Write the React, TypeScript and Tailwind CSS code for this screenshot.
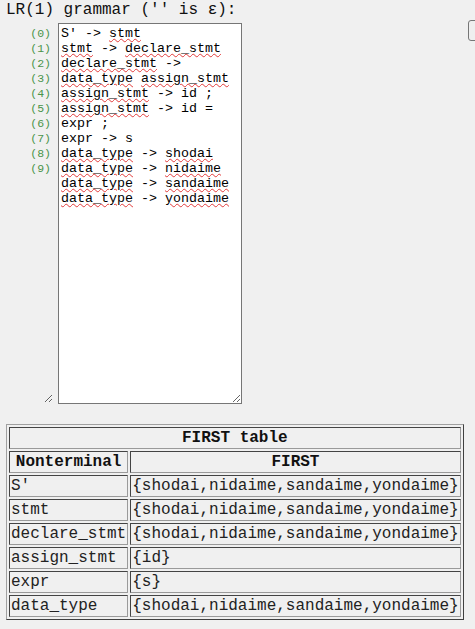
import React from "react";

const U = ({ children }: { children: React.ReactNode }) => (
  <span className="underline decoration-wavy decoration-[#e23a3a] decoration-1 underline-offset-[1px]">
    {children}
  </span>
);

const grammarLines: React.ReactNode[] = [
  <>S' -&gt; <U>stmt</U></>,
  <><U>stmt</U> -&gt; <U>declare_stmt</U></>,
  <><U>declare_stmt</U> -&gt;</>,
  <><U>data_type</U> <U>assign_stmt</U></>,
  <><U>assign_stmt</U> -&gt; id ;</>,
  <><U>assign_stmt</U> -&gt; id =</>,
  <>expr ;</>,
  <>expr -&gt; s</>,
  <><U>data_type</U> -&gt; <U>shodai</U></>,
  <><U>data_type</U> -&gt; <U>nidaime</U></>,
  <><U>data_type</U> -&gt; <U>sandaime</U></>,
  <><U>data_type</U> -&gt; <U>yondaime</U></>,
];

const rows: [string, string][] = [
  ["S'", "{shodai,nidaime,sandaime,yondaime}"],
  ["stmt", "{shodai,nidaime,sandaime,yondaime}"],
  ["declare_stmt", "{shodai,nidaime,sandaime,yondaime}"],
  ["assign_stmt", "{id}"],
  ["expr", "{s}"],
  ["data_type", "{shodai,nidaime,sandaime,yondaime}"],
];

const cell =
  "border border-t-[#444] border-l-[#444] border-b-[#9a9a9a] border-r-[#9a9a9a] p-[1px] leading-[18px]";

export default function App() {
  return (
    <div className="min-h-screen w-full overflow-hidden bg-[#f0f0f0] font-['Liberation_Mono',monospace] text-[#111]">
      <div className="h-[20px] pl-[6px] pt-[1px] text-[16px] leading-[19px] whitespace-pre">
        LR(1) grammar ('' is ε):
      </div>
      <div className="flex items-start pl-[6px]">
        <textarea
          readOnly
          spellCheck={false}
          className="mt-[3px] h-[381px] w-[48px] shrink-0 border border-transparent bg-transparent p-[2px] text-right text-[11.5px] leading-[15px] text-[#4a944a] outline-none font-['Liberation_Mono',monospace]"
          value={"(0)\n(1)\n(2)\n(3)\n(4)\n(5)\n(6)\n(7)\n(8)\n(9)"}
        />
        <div className="ml-[4px] mt-[3px] h-[381px] w-[184px] shrink-0 resize overflow-auto border border-[#767676] bg-white p-[2px] text-[13.333px] leading-[15px] whitespace-pre text-black">
          {grammarLines.map((l, i) => (
            <div key={i}>{l}</div>
          ))}
        </div>
        <button className="ml-[226px] h-[21px] w-[60px] shrink-0 rounded-[3px] border border-[#767676] bg-[#efefef]" />
      </div>
      <table className="ml-[6px] mt-[20px] border-separate border-spacing-[2px] border border-t-[#a0a0a0] border-l-[#a0a0a0] border-r-[#404040] border-b-[#404040] text-[16px]">
        <tbody>
          <tr>
            <th colSpan={2} className={`${cell} text-center font-bold`}>
              FIRST table
            </th>
          </tr>
          <tr>
            <th className={`${cell} text-center font-bold`}>Nonterminal</th>
            <th className={`${cell} text-center font-bold`}>FIRST</th>
          </tr>
          {rows.map(([a, b]) => (
            <tr key={a}>
              <td className={`${cell} text-left whitespace-pre text-[#222]`}>{a}</td>
              <td className={`${cell} text-left whitespace-pre text-[#222]`}>{b}</td>
            </tr>
          ))}
        </tbody>
      </table>
    </div>
  );
}
